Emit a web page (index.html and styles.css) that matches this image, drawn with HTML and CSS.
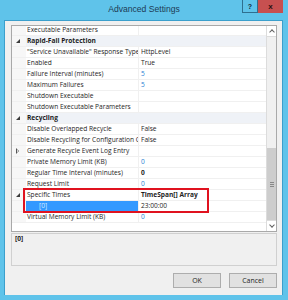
FILE: index.html
```html
<!DOCTYPE html>
<html lang="en">
<head>
    <meta charset="UTF-8">
    <title>Advanced Settings</title>
    <link rel="stylesheet" href="styles.css">
</head>
<body>

    <div class="window">
        <div class="titlebar">
            <span></span>
            <span class="title">Advanced Settings</span>
            <div class="caption-buttons">
                <span class="cap-btn help">?</span>
                <span class="cap-btn close">x</span>
            </div>
        </div>

        <div class="client">
            <!-- Property grid -->
            <div class="grid">
                <div class="rows">
                    <div class="row"><span class="margin"></span><span class="name">Executable Parameters</span><span class="value"></span></div>
                    <div class="row category"><span class="margin"><i class="open"></i></span><span class="name">Rapid-Fail Protection</span><span class="value"></span></div>
                    <div class="row"><span class="margin"></span><span class="name">"Service Unavailable" Response Type</span><span class="value">HttpLevel</span></div>
                    <div class="row"><span class="margin"></span><span class="name">Enabled</span><span class="value">True</span></div>
                    <div class="row"><span class="margin"></span><span class="name">Failure Interval (minutes)</span><span class="value num">5</span></div>
                    <div class="row"><span class="margin"></span><span class="name">Maximum Failures</span><span class="value num">5</span></div>
                    <div class="row"><span class="margin"></span><span class="name">Shutdown Executable</span><span class="value"></span></div>
                    <div class="row"><span class="margin"></span><span class="name">Shutdown Executable Parameters</span><span class="value"></span></div>
                    <div class="row category"><span class="margin"><i class="open"></i></span><span class="name">Recycling</span><span class="value"></span></div>
                    <div class="row"><span class="margin"></span><span class="name">Disable Overlapped Recycle</span><span class="value">False</span></div>
                    <div class="row"><span class="margin"></span><span class="name">Disable Recycling for Configuration Changes</span><span class="value">False</span></div>
                    <div class="row"><span class="margin"><i class="closed"></i></span><span class="name">Generate Recycle Event Log Entry</span><span class="value"></span></div>
                    <div class="row"><span class="margin"></span><span class="name">Private Memory Limit (KB)</span><span class="value num">0</span></div>
                    <div class="row"><span class="margin"></span><span class="name">Regular Time Interval (minutes)</span><span class="value bold">0</span></div>
                    <div class="row"><span class="margin"></span><span class="name">Request Limit</span><span class="value num">0</span></div>
                    <div class="row"><span class="margin"><i class="open"></i></span><span class="name">Specific Times</span><span class="value bold">TimeSpan[] Array</span></div>
                    <div class="row selected"><span class="margin"></span><span class="name child">[0]</span><span class="value">23:00:00</span></div>
                    <div class="row"><span class="margin"></span><span class="name">Virtual Memory Limit (KB)</span><span class="value num">0</span></div>
                    <div class="highlight"></div>
                </div>
                <div class="scrollbar">
                    <span class="arrow up"></span>
                    <span class="track"></span>
                    <span class="thumb"><i></i></span>
                    <span class="arrow down"></span>
                </div>
            </div>

            <!-- Description pane -->
            <div class="description"><strong>[0]</strong></div>

            <div class="buttons">
                <button class="button">OK</button>
                <button class="button">Cancel</button>
            </div>
        </div>
    </div>

</body>
</html>
```

FILE: styles.css
```css
body {
    margin: 0;
    padding: 0;
    font-family: 'Open Sans', 'Liberation Sans', sans-serif;
    font-size: 6.6px;
    color: #1e1e1e;
}

.window {
    width: 288px;
    height: 300px;
    box-sizing: border-box;
    background-color: #5fc3ea;
    padding: 0 5px 5px 4px;
    display: flex;
    flex-direction: column;
}

.titlebar {
    height: 20px;
    margin: 0 -5px 0 -4px;
    display: grid;
    grid-template-columns: 1fr auto 1fr;
}

.title {
    font-family: 'Liberation Sans', sans-serif;
    font-size: 8.6px;
    color: #1d3b55;
    line-height: 18px;
}

.caption-buttons {
    justify-self: end;
    display: flex;
    padding-right: 5px;
    height: 13px;
}

.cap-btn {
    display: flex;
    align-items: center;
    justify-content: center;
    font-family: 'Liberation Sans', sans-serif;
    font-weight: bold;
    font-size: 7px;
    box-sizing: border-box;
    height: 13px;
}

.help {
    width: 16px;
    border: 1px solid #2f6f90;
    border-top: none;
    color: #10283a;
}

.close {
    width: 25px;
    background-color: #c75050;
    color: #2a1010;
    font-size: 8px;
}

.client {
    flex: 1;
    background-color: #f0f0f0;
    border: 1px solid #3b9fcc;
    border-bottom: none;
    padding: 4px 5px 0 6px;
    display: flex;
    flex-direction: column;
}

/* Property grid */
.grid {
    height: 207px;
    box-sizing: border-box;
    border: 1px solid #a9a9a9;
    background-color: #ffffff;
    display: flex;
    overflow: hidden;
}

.rows {
    flex: 1;
    margin-top: -1px;
    position: relative;
}

.row {
    height: 11px;
    box-sizing: border-box;
    border-bottom: 1px solid #f0f0f0;
    display: grid;
    grid-template-columns: 14px 113px 1fr;
    line-height: 10px;
    white-space: nowrap;
}

.margin {
    background-color: #f7f7f7;
    position: relative;
}

.name {
    padding-left: 1px;
    overflow: hidden;
    border-right: 1px solid #f0f0f0;
}

.value {
    padding-left: 2px;
    overflow: hidden;
}

.num {
    color: #2c82d3;
}

.bold {
    font-weight: bold;
}

.category .name,
.category .value {
    background-color: #eff2f7;
}

.category .name {
    font-weight: bold;
    border-right: none;
}

.selected .name {
    background-color: #3399ff;
    color: #d9ecff;
}

.child {
    padding-left: 13px;
}

.open {
    position: absolute;
    left: 4px;
    top: 3px;
    width: 0;
    height: 0;
    border-left: 4px solid transparent;
    border-bottom: 4px solid #3c3c3c;
}

.closed {
    position: absolute;
    left: 4px;
    top: 2px;
    width: 0;
    height: 0;
    border-top: 3px solid transparent;
    border-bottom: 3px solid transparent;
    border-left: 3px solid #555;
}

.closed::after {
    content: "";
    position: absolute;
    left: -2px;
    top: -2px;
    border-top: 2px solid transparent;
    border-bottom: 2px solid transparent;
    border-left: 1.5px solid #ffffff;
}

.highlight {
    position: absolute;
    left: 11px;
    top: 163px;
    width: 186px;
    height: 25px;
    box-sizing: border-box;
    border: 2px solid #e0121f;
}

/* Scrollbar */
.scrollbar {
    width: 10px;
    box-sizing: border-box;
    border-left: 1px solid #dcdcdc;
    background-color: #f0f0f0;
    display: flex;
    flex-direction: column;
}

.arrow {
    height: 10px;
    background-color: #ffffff;
    border-bottom: 1px solid #dcdcdc;
    display: flex;
    align-items: center;
    justify-content: center;
}

.arrow.down {
    border-top: 1px solid #dcdcdc;
    border-bottom: none;
}

.arrow::before {
    content: "";
    width: 3px;
    height: 3px;
    border-left: 1px solid #606060;
    border-top: 1px solid #606060;
    transform: rotate(45deg);
    margin-top: 2px;
}

.arrow.down::before {
    transform: rotate(-135deg);
    margin-top: -2px;
}

.track {
    height: 111px;
}

.thumb {
    flex: 1;
    background-color: #cdcdcd;
    display: flex;
    align-items: center;
    justify-content: center;
}

.thumb i {
    width: 4px;
    height: 3px;
    border-top: 1px solid #888;
    border-bottom: 1px solid #888;
    background: linear-gradient(#cdcdcd 1px, #888 1px, #888 2px, #cdcdcd 2px);
}

/* Description pane */
.description {
    margin-top: 1px;
    height: 33px;
    box-sizing: border-box;
    border: 1px solid #d0d0d0;
    padding: 0 3px;
    line-height: 9px;
}

.buttons {
    display: flex;
    justify-content: flex-end;
    gap: 8px;
    margin-top: 7px;
}

.button {
    width: 48px;
    height: 15px;
    padding: 0;
    background-color: #e1e1e1;
    border: 1px solid #adadad;
    font-family: inherit;
    font-size: 7px;
    color: #1e1e1e;
}
```
